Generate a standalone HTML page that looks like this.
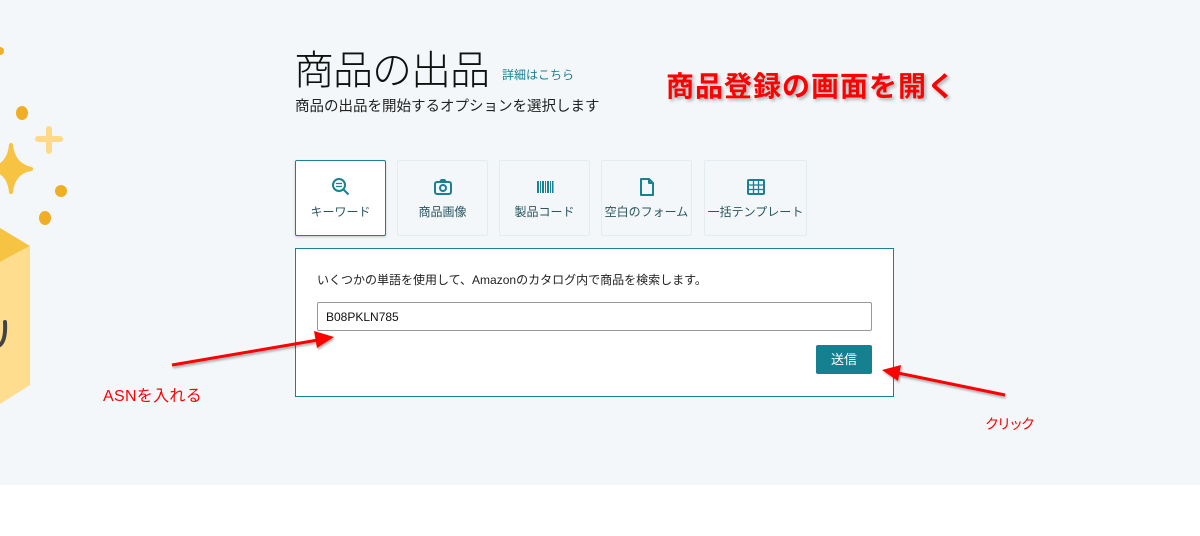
<!DOCTYPE html>
<html><head><meta charset="utf-8"><style>
body{margin:0;width:1200px;height:536px;background:#fff;position:relative;overflow:hidden;font-family:"Liberation Sans","Noto Sans CJK JP",sans-serif;}
.bg{position:absolute;left:0;top:0;width:1200px;height:485px;background:#f3f7f9;}
.a{position:absolute;white-space:nowrap;}
.tab{position:absolute;top:160px;height:76px;border:1px solid #e3ecef;background:#f3f7f9;box-sizing:border-box;border-radius:2px;text-align:center;font-size:12px;color:#2b5561;}
.tab svg{display:block;margin:16px auto 6px;}
.tab.on{background:#fff;border:1px solid #1a8092;box-shadow:0 1px 2px rgba(0,0,0,.2);}
</style></head><body>
<div class="bg"></div>
<svg class="a" style="left:0;top:0" width="80" height="420">
<circle cx="0" cy="51" r="4" fill="#f0ae24"/>
<ellipse cx="22" cy="113" rx="6" ry="7" fill="#f0ae24"/>
<path d="M49 129v22M38 139h22" stroke="#ffd98a" stroke-width="6" stroke-linecap="round"/>
<path d="M11 145 Q13 165 31 169 Q13 172 11 192 Q9 172 -8 169 Q9 165 11 145Z" fill="#f6c342" stroke="#f6c342" stroke-width="4" stroke-linejoin="round"/>
<circle cx="61" cy="191" r="6" fill="#f0ae24"/>
<ellipse cx="45" cy="218" rx="6" ry="7" fill="#f0ae24"/>
<polygon points="0,228 30,246 0,262" fill="#f6c342"/>
<polygon points="0,262 30,246 30,385 0,404" fill="#ffdd8f"/>
<path d="M0 345 Q6 340 5 322" stroke="#444" stroke-width="4" fill="none" stroke-linecap="round"/>
</svg>
<div class="a" style="left:294px;top:38px;font-size:40px;color:#0f1111;font-weight:300;letter-spacing:-1px">商品の出品</div>
<div class="a" style="left:502px;top:66px;font-size:12px;color:#1a8092">詳細はこちら</div>
<div class="a" style="left:295px;top:95px;font-size:14.5px;color:#222">商品の出品を開始するオプションを選択します</div>
<div class="a" style="left:666px;top:65px;font-size:28px;color:#ff0000;font-weight:bold;letter-spacing:1px;text-shadow:2px 2px 3px rgba(0,0,0,.3)">商品登録の画面を開く</div>

<div class="tab on" style="left:295px;width:91px"><svg width="20" height="20" viewBox="0 0 20 20" fill="none" stroke="#1a8092" stroke-width="2"><circle cx="8" cy="8" r="6"/><path d="M12.5 12.5l5 5"/><path d="M5 6.5h6M5 9.5h6" stroke-width="1.3"/></svg>キーワード</div>
<div class="tab" style="left:397px;width:91px"><svg width="20" height="20" viewBox="0 0 20 20" fill="none" stroke="#1a8092" stroke-width="2"><rect x="2" y="5" width="16" height="12" rx="2"/><path d="M7 5l1.5-2h3L13 5"/><circle cx="10" cy="11" r="3"/></svg>商品画像</div>
<div class="tab" style="left:499px;width:91px"><svg width="20" height="20" viewBox="0 0 20 20" fill="#1a8092"><rect x="2" y="4" width="2" height="12"/><rect x="5" y="4" width="1" height="12"/><rect x="7" y="4" width="2" height="12"/><rect x="10" y="4" width="1" height="12"/><rect x="12" y="4" width="2" height="12"/><rect x="15" y="4" width="1" height="12"/><rect x="17" y="4" width="1.5" height="12"/></svg>製品コード</div>
<div class="tab" style="left:601px;width:91px"><svg width="20" height="20" viewBox="0 0 20 20" fill="none" stroke="#1a8092" stroke-width="2" stroke-linejoin="round"><path d="M4 2h8l4 4v12H4z"/><path d="M12 2v4h4"/></svg>空白のフォーム</div>
<div class="tab" style="left:704px;width:103px"><svg width="20" height="20" viewBox="0 0 20 20" fill="none" stroke="#1a8092" stroke-width="2"><rect x="2" y="3" width="16" height="14" rx="1"/><path d="M2 8h16M2 12.5h16M7.5 3v14M12.5 3v14" stroke-width="1.3"/></svg>一括テンプレート</div>

<div class="a" style="left:295px;top:248px;width:599px;height:149px;box-sizing:border-box;border:1px solid #1a8092;background:#fff"></div>
<div class="a" style="left:317px;top:271px;font-size:12px;color:#222">いくつかの単語を使用して、Amazonのカタログ内で商品を検索します。</div>
<div class="a" style="left:317px;top:302px;width:555px;height:29px;box-sizing:border-box;border:1px solid #999;border-radius:2px;background:#fff;font-size:12px;color:#111;padding:7px 8px">B08PKLN785</div>
<div class="a" style="left:816px;top:345px;width:56px;height:29px;background:#15808f;border-radius:2px;color:#fff;font-size:13px;text-align:center;line-height:29px">送信</div>

<div class="a" style="left:103px;top:382px;font-size:16px;color:#ff0000;letter-spacing:0.3px">ASNを入れる</div>
<div class="a" style="left:985px;top:414px;font-size:14px;color:#ff0000;letter-spacing:-2px">クリック</div>
<svg class="a" style="left:0;top:0" width="1200" height="536">
<defs><filter id="s"><feDropShadow dx="1" dy="2" stdDeviation="1" flood-opacity=".3"/></filter></defs>
<g filter="url(#s)" fill="#ff0000" stroke="#ff0000">
<line x1="172" y1="365" x2="318" y2="340" stroke-width="3"/>
<polygon points="334,337 314,331 317,348" stroke="none"/>
<line x1="1005" y1="395" x2="898" y2="373" stroke-width="3"/>
<polygon points="882,370 901,365 898,381" stroke="none"/>
</g>
</svg>
</body></html>
